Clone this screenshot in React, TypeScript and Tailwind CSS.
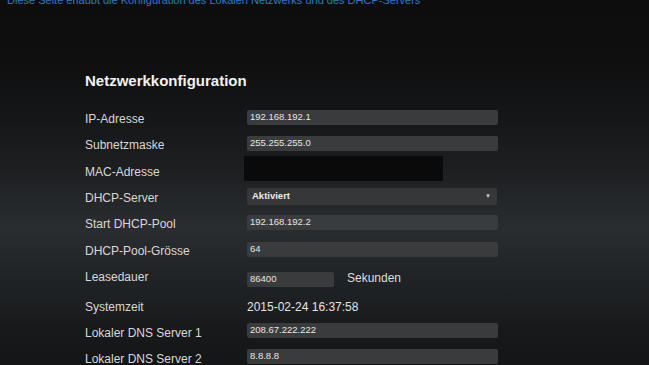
import React from 'react';

type Row = {
  label: string;
  kind: 'input' | 'mac' | 'select' | 'lease' | 'text';
  value?: string;
  h: string;
  shift?: string;
};

const rows: Row[] = [
  { label: 'IP-Adresse', kind: 'input', value: '192.168.192.1', h: 'h-[26px]', shift: 'mb-[3px]' },
  { label: 'Subnetzmaske', kind: 'input', value: '255.255.255.0', h: 'h-[26px]', shift: 'mb-[3px]' },
  { label: 'MAC-Adresse', kind: 'mac', h: 'h-[27px]' },
  { label: 'DHCP-Server', kind: 'select', value: 'Aktiviert', h: 'h-[26px]' },
  { label: 'Start DHCP-Pool', kind: 'input', value: '192.168.192.2', h: 'h-[26px]', shift: 'mb-[3px]' },
  { label: 'DHCP-Pool-Grösse', kind: 'input', value: '64', h: 'h-[27px]', shift: 'mb-[3px]' },
  { label: 'Leasedauer', kind: 'lease', value: '86400', h: 'h-[26px]' },
  { label: 'Systemzeit', kind: 'text', value: '2015-02-24 16:37:58', h: 'h-[26px] mt-[4px]' },
  { label: 'Lokaler DNS Server 1', kind: 'input', value: '208.67.222.222', h: 'h-[26px]', shift: 'mb-[5px]' },
  { label: 'Lokaler DNS Server 2', kind: 'input', value: '8.8.8.8', h: 'h-[26px]', shift: 'mb-[5px]' },
];

function Field({ row }: { row: Row }) {
  if (row.kind === 'mac') {
    return <div className="w-[199px] h-[25px] bg-[#0a0a0a] -ml-[3px] mb-[6px]" />;
  }
  if (row.kind === 'select') {
    return (
      <div className="w-[250px] h-[17px] mb-[3px] bg-[#353738] rounded-[2px] flex items-center justify-between pl-[5px] pr-[6px] text-[9.5px] font-bold text-[#ececec]">
        <span>{row.value}</span>
        <span className="text-[6px] text-[#cfcfcf]">▼</span>
      </div>
    );
  }
  if (row.kind === 'lease') {
    return (
      <div className="flex items-center">
        <div className="w-[87px] h-[15px] mt-[4px] bg-[#3a3b3c] rounded-[2px] flex items-center pl-[3px] text-[9.5px] text-[#e6e6e6]">
          {row.value}
        </div>
        <span className="ml-[13px] text-[12px] text-[#dedede] mt-[2px]">Sekunden</span>
      </div>
    );
  }
  if (row.kind === 'text') {
    return <span className="text-[12px] text-[#e4e4e4]">{row.value}</span>;
  }
  return (
    <div className={`w-[251px] h-[15px] bg-[#3a3b3c] rounded-[2px] flex items-center pl-[3px] text-[9.5px] text-[#e6e6e6] ${row.shift}`}>
      {row.value}
    </div>
  );
}

export default function App() {
  return (
    <div className="h-screen w-full overflow-hidden font-['Liberation_Sans',Arial,sans-serif] bg-[linear-gradient(to_bottom,#0d0d0e_0px,#0f0f10_60px,#141516_110px,#1d1f21_170px,#2a2d30_228px,#202325_280px,#18191b_330px,#141515_365px)]">
      <p className="-mt-[6px] ml-[7px] text-[11px] leading-[13px] text-[#2d7cc2] whitespace-nowrap">
        Diese Seite erlaubt die Konfiguration des Lokalen Netzwerks und des DHCP-Servers
      </p>
      <div className="pl-[85px] pt-[65px]">
        <h2 className="text-[15px] leading-[18px] font-bold text-[#f2f2f2]">Netzwerkkonfiguration</h2>
        <div className="mt-[16px] flex flex-col">
          {rows.map((r) => (
            <div key={r.label} className={`flex items-center ${r.h}`}>
              <span className="w-[162px] shrink-0 text-[12px] leading-[26px] text-[#d8d8d8]">{r.label}</span>
              <Field row={r} />
            </div>
          ))}
        </div>
      </div>
    </div>
  );
}
